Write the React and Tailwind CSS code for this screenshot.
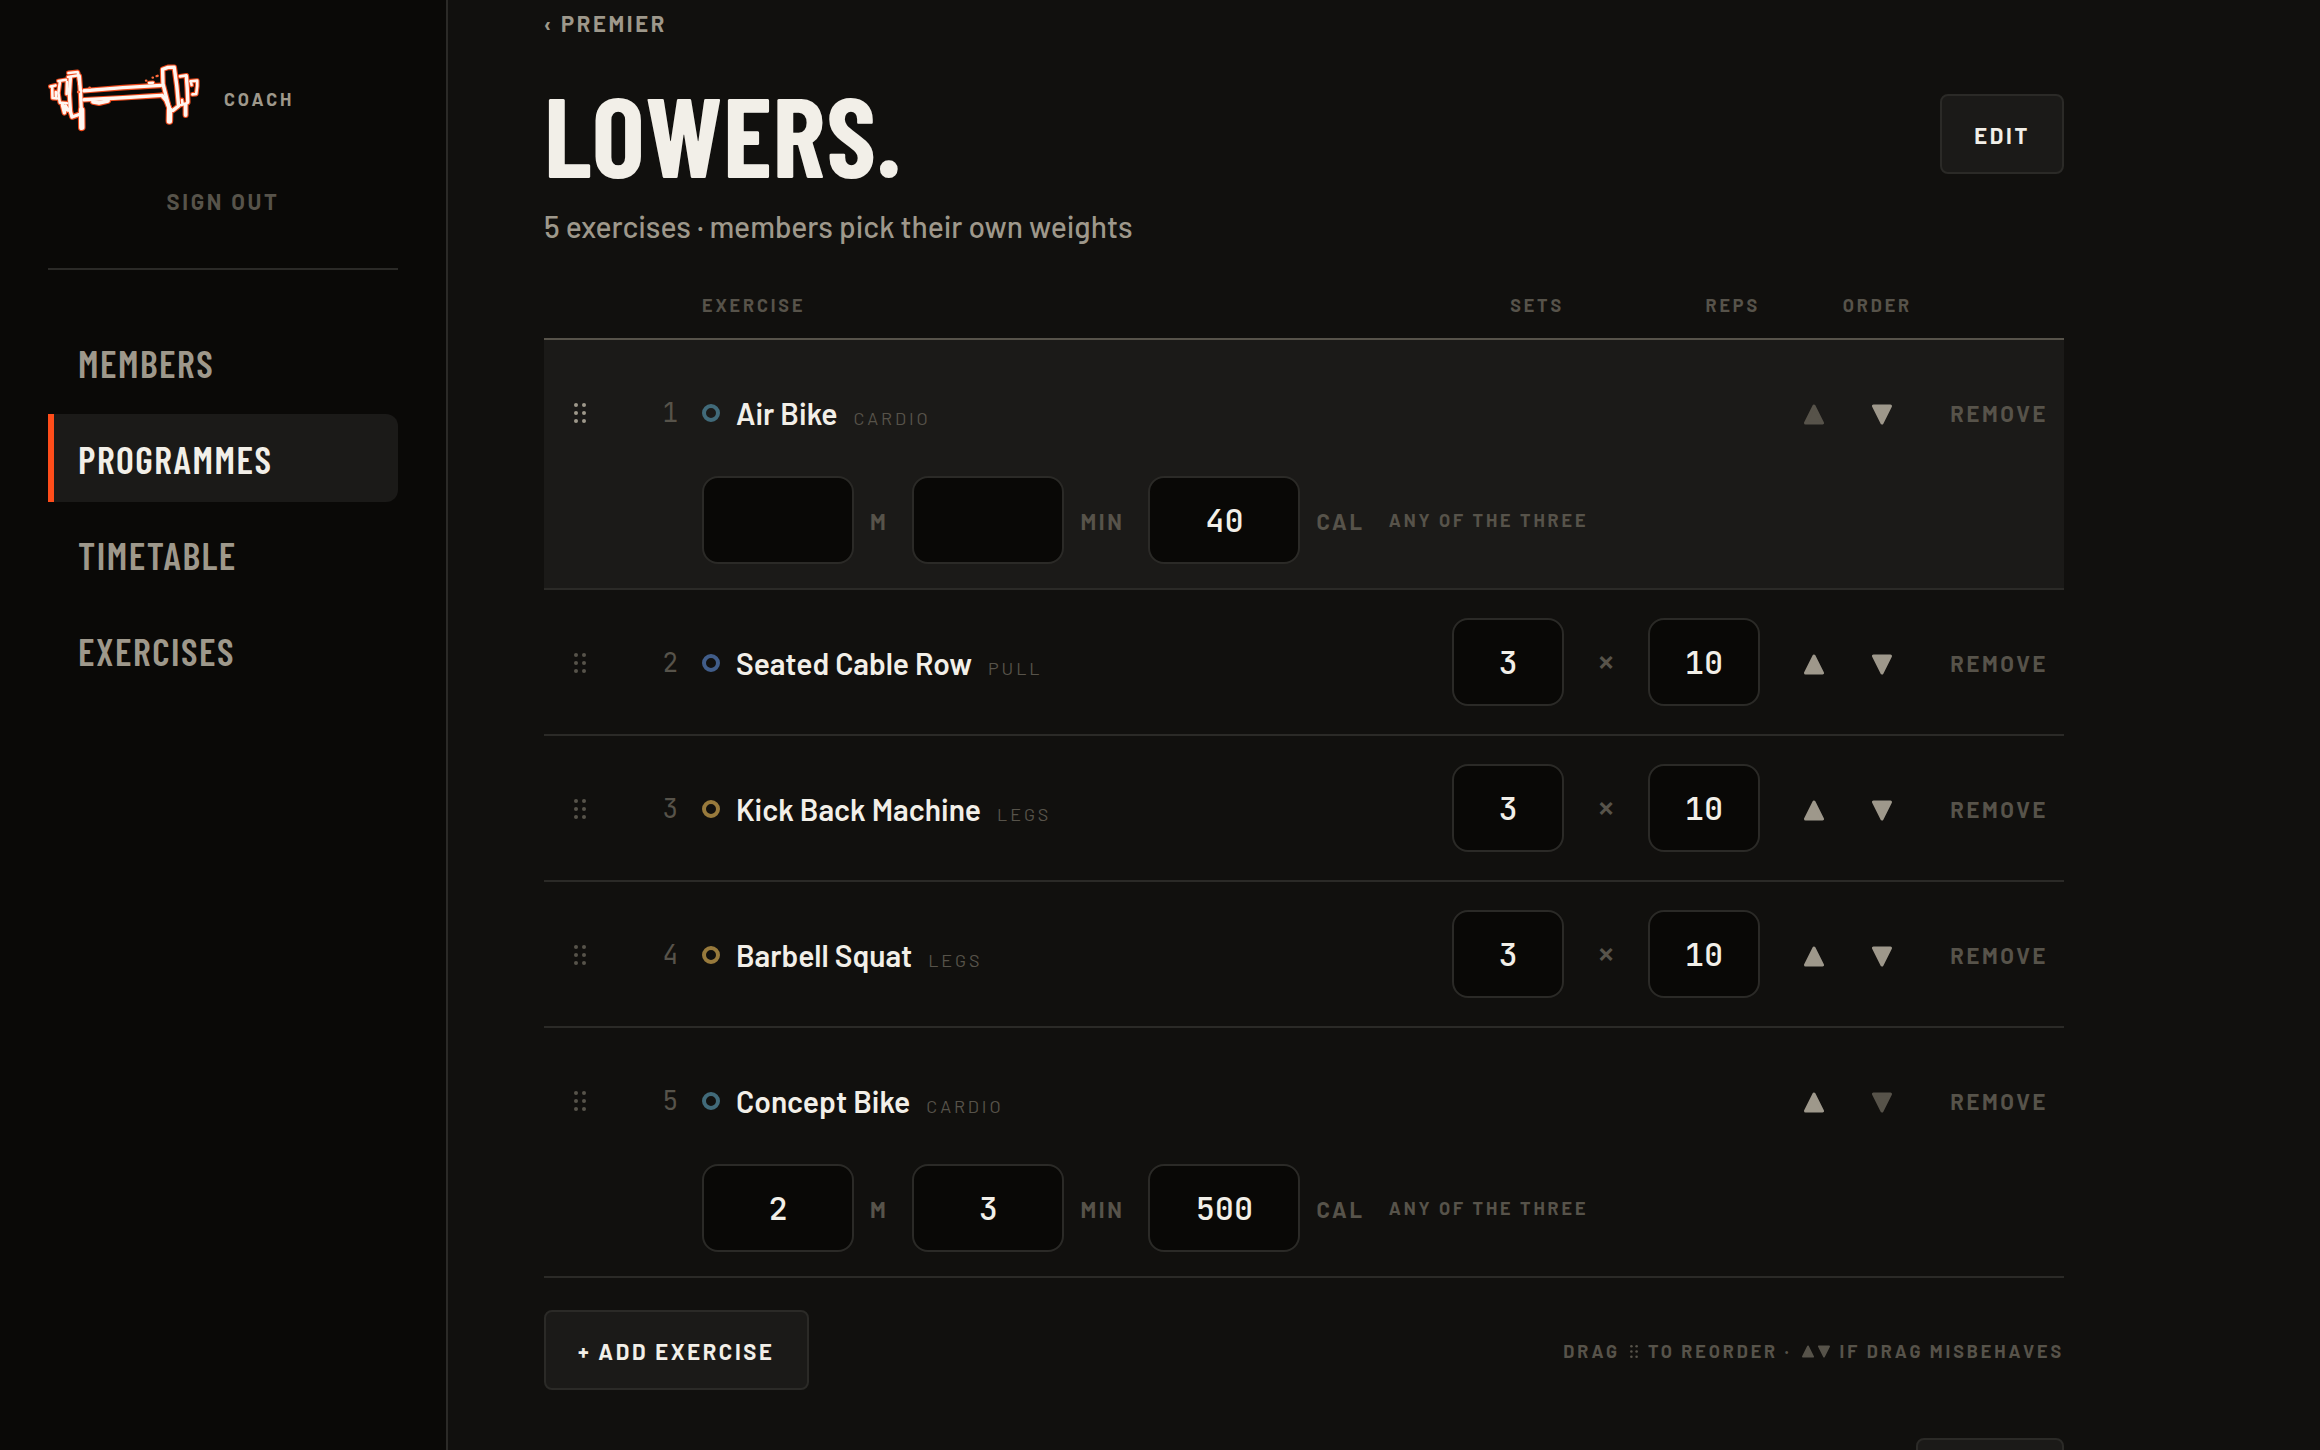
import { useState } from "react";

const NAV = ["Members", "Programmes", "Timetable", "Exercises"];

const EXERCISES = [
  { name: "Air Bike", group: "Cardio", targets: ["", "", "40"] },
  { name: "Seated Cable Row", group: "Pull", sets: "3", reps: "10" },
  { name: "Kick Back Machine", group: "Legs", sets: "3", reps: "10" },
  { name: "Barbell Squat", group: "Legs", sets: "3", reps: "10" },
  { name: "Concept Bike", group: "Cardio", targets: ["2", "3", "500"] },
];

const RING = {
  Cardio: "border-[#416a79]",
  Pull: "border-[#415d89]",
  Legs: "border-[#987a3c]",
};

const UNITS = ["m", "min", "cal"];

const buttonStyle =
  "h-20 rounded-lg border-2 border-[#2b2a27] bg-[#1b1a18] px-8 pt-0.5 text-[22px] font-bold uppercase tracking-[0.12em] text-[#f2efe8]";

const fieldStyle =
  "h-[88px] rounded-2xl border-2 border-[#2b2a27] bg-[#090806] text-center font-['JetBrains_Mono',monospace] text-[32px] font-medium tracking-normal text-[#f2efe8] outline-none";

function Logo() {
  const layers = [
    { color: "#ee4a1c", extra: 2.2 },
    { color: "#fff6f0", extra: 0 },
  ];
  return (
    <svg viewBox="0 0 152 68" className="h-[68px] w-[152px]" role="img" aria-label="Dumbbell" fill="none" strokeLinejoin="round" strokeLinecap="round">
      {layers.map(({ color, extra }) => (
        <g key={color} stroke={color}>
          <g strokeWidth={2.6 + extra}>
            <path d="M2.4 22.5 L7.5 21.4 M4.2 23 L4.5 34 L9 34.4 M7.8 28 L8 34" />
            <path d="M10.4 17 L18 15.8 M12 17.5 L10.4 29 L11.8 38.6 L19 39.2 M19 18 L18.6 30" />
            <path d="M20.4 9 L29.5 8 M20 13 L29 11.5 M30 8.6 L31.5 20" />
            <path d="M132 12.4 L138.5 11.4 M133 41 L139.5 39 M134.5 40 L134 36" />
            <path d="M142.4 17.2 L149.2 16.6 L149.2 22 L148.2 30 L144.4 30.4 M142.8 17.6 L143.6 21" />
          </g>
          <g strokeWidth={3.4 + extra}>
            <path d="M14.4 41 L16.4 48.8 L17.4 42 L20 46 M22 46 L24 53 L31 50.5" />
            <path d="M22.4 13.4 L21.4 30 L22.4 47" />
            <path d="M31.3 12 L32.6 30 L33.4 51" />
            <path d="M36 26.8 L75 23.6 L113 21.4" />
            <path d="M36 35.8 L75 33.8 L113 31.4" />
            <path d="M115 20 L114.6 5.4 L120 3.4 L126.2 3.2 L128.8 22 L130.6 42 L125 46.4 L121.8 46.4 L115 20" />
            <path d="M138.4 12.4 L139.2 24 L139.8 38" />
          </g>
          <g strokeWidth={3.8 + extra}>
            <path d="M45 37.8 L51 39 L60 36.8" />
            <path d="M114 31.4 L118.2 36.4 L121.2 44" />
            <path d="M137.6 41 L137.6 51" />
          </g>
          <g strokeWidth={5.4 + extra}>
            <path d="M33.6 46 L33.8 63.4" />
            <path d="M121.6 46 L121.4 57" />
          </g>
          <path d="M101 19 L105 18.7" strokeWidth={2.4 + extra} />
        </g>
      ))}
      <path d="M98 16.6 L98.3 16.6 M104.6 13.6 L104.9 13.6 M108.6 12.1 L109.6 11.8 M41.5 23.6 L41.8 23.6 M30 28 L31 28" stroke="#ff6a3c" strokeWidth="2.4" />
    </svg>
  );
}

function Triangle({ down, className = "h-[21px] w-5" }) {
  return (
    <svg viewBox="0 0 20 21" className={className} fill="currentColor" stroke="currentColor" strokeWidth="3" strokeLinejoin="round" aria-hidden="true">
      <path d={down ? "M1.5 2 H18.5 L10 19 Z" : "M10 2 L18.5 19 H1.5 Z"} />
    </svg>
  );
}

function Grip({ className = "h-5 w-3" }) {
  return (
    <svg viewBox="0 0 12 20" className={className} fill="currentColor" aria-hidden="true">
      {[2, 10].map((x) => [2, 10, 18].map((y) => <circle key={`${x}-${y}`} cx={x} cy={y} r="2" />))}
    </svg>
  );
}

function Field({ label, initial, className }) {
  const [value, setValue] = useState(initial);
  return (
    <input
      type="text"
      inputMode="numeric"
      aria-label={label}
      value={value}
      onChange={(e) => setValue(e.target.value)}
      className={className}
    />
  );
}

function ExerciseRows({ item, index, count }) {
  const { name, group, targets } = item;
  const first = index === 0;
  const last = index === count - 1;
  const pad = targets ? "pt-7 pb-5" : "py-7";
  const moveStyle = "flex h-[88px] w-[68px] items-center justify-center pt-1 text-[#9e988b] disabled:text-[#57534a]";
  return (
    <tbody className={first ? "border-b-2 border-[#2b2a27] bg-[#1b1a18]" : "border-b-2 border-[#2b2a27]"}>
      <tr>
        <td className={pad}>
          <button
            type="button"
            aria-label={`Drag ${name}`}
            className={`flex h-[88px] w-[72px] items-center justify-center pt-0.5 ${first ? "text-[#9e988b]" : "text-[#57534a]"}`}
          >
            <Grip />
          </button>
        </td>
        <td className={`${pad} pr-6 text-right font-['JetBrains_Mono',monospace] text-[26px] text-[#57534a]`}>{index + 1}</td>
        <td className={pad}>
          <div className="flex h-[88px] items-center gap-4 pt-0.5">
            <span className={`size-[18px] shrink-0 rounded-full border-4 ${RING[group]}`} />
            <span className="flex items-baseline gap-4 whitespace-nowrap">
              <span className="text-[30px] font-semibold text-[#f2efe8]">{name}</span>
              <span className="text-[18px] uppercase tracking-[0.16em] text-[#57534a]">{group}</span>
            </span>
          </div>
        </td>
        <td className={`${pad} text-right`}>
          {!targets && <Field label={`${name} sets`} initial={item.sets} className={`w-28 ${fieldStyle}`} />}
        </td>
        <td className={`${pad} text-center font-['JetBrains_Mono',monospace] text-[32px] font-medium text-[#57534a]`}>{!targets && "×"}</td>
        <td className={`${pad} text-right`}>
          {!targets && <Field label={`${name} reps`} initial={item.reps} className={`w-28 ${fieldStyle}`} />}
        </td>
        <td className={pad}>
          <div className="flex justify-end">
            <button type="button" disabled={first} aria-label={`Move ${name} up`} className={moveStyle}>
              <Triangle />
            </button>
            <button type="button" disabled={last} aria-label={`Move ${name} down`} className={moveStyle}>
              <Triangle down />
            </button>
          </div>
        </td>
        <td className={`${pad} text-right`}>
          <button type="button" className="h-[88px] px-4 pt-0.5 text-[22px] font-bold uppercase tracking-[0.12em] text-[#57534a]">
            Remove
          </button>
        </td>
      </tr>
      {targets && (
        <tr>
          <td colSpan={2} />
          <td colSpan={6} className="pb-6">
            <div className="flex items-center text-[22px] font-bold uppercase tracking-[0.12em] text-[#57534a]">
              {UNITS.map((unit, i) => (
                <label key={unit} className="mr-6 flex items-center gap-4">
                  <Field label={`${name} ${unit}`} initial={targets[i]} className={`w-[152px] ${fieldStyle}`} />
                  <span className="pt-0.5">{unit}</span>
                </label>
              ))}
              <span className="text-[18px] tracking-[0.16em]">any of the three</span>
            </div>
          </td>
        </tr>
      )}
    </tbody>
  );
}

export default function App() {
  return (
    <div className="flex h-screen overflow-hidden bg-[#11100e] font-['Barlow','Roboto',sans-serif] leading-normal text-[#f2efe8]">
      <aside className="flex w-[448px] shrink-0 flex-col border-r-2 border-[#2b2a27] bg-[#0a0907] px-12 pt-16">
        <div className="flex items-center gap-6">
          <Logo />
          <span className="pt-0.5 text-[18px] font-bold uppercase tracking-[0.16em] text-[#9e988b]">Coach</span>
        </div>
        <div className="mt-8 flex h-[106px] items-start justify-center border-b-2 border-[#2b2a27]">
          <button type="button" className="h-[74px] text-[22px] font-bold uppercase tracking-[0.12em] text-[#57534a]">
            Sign out
          </button>
        </div>
        <nav className="mt-12 flex flex-col gap-2">
          {NAV.map((item) => (
            <a
              key={item}
              href={`#${item.toLowerCase()}`}
              className={`flex h-[88px] items-center rounded-r-xl border-l-[6px] px-6 pt-0.5 font-['Barlow_Condensed','Roboto_Condensed',sans-serif] text-[38px] font-semibold uppercase tracking-[0.04em] ${
                item === "Programmes" ? "border-[#ff4d1a] bg-[#1b1a18] text-[#f2efe8]" : "border-transparent text-[#9e988b]"
              }`}
            >
              {item}
            </a>
          ))}
        </nav>
      </aside>

      <main className="min-w-0 flex-1 px-24">
        <div className="max-w-[1520px]">
          <a href="#premier" className="flex h-[46px] items-center text-[22px] font-bold uppercase tracking-[0.12em] text-[#9e988b]">
            ‹ Premier
          </a>
          <header className="mt-8 flex items-start justify-between">
            <div>
              <h1 className="font-['Barlow_Condensed','Roboto_Condensed',sans-serif] text-[112px] leading-[110px] font-bold tracking-[0.005em] uppercase">
                Lowers.
              </h1>
              <p className="mt-4 text-[30px] font-medium text-[#9e988b]">5 exercises · members pick their own weights</p>
            </div>
            <button type="button" className={`mt-4 ${buttonStyle}`}>
              Edit
            </button>
          </header>

          <table className="mt-6 w-full table-fixed border-collapse">
            <colgroup>
              <col className="w-[72px]" />
              <col className="w-[86px]" />
              <col />
              <col className="w-[120px]" />
              <col className="w-[84px]" />
              <col className="w-[112px]" />
              <col className="w-[156px]" />
              <col className="w-[148px]" />
            </colgroup>
            <thead className="border-b-2 border-[#57534a] text-[18px] uppercase tracking-[0.16em] text-[#57534a]">
              <tr className="h-[66px]">
                <th />
                <th />
                <th className="text-left font-bold">Exercise</th>
                <th className="text-right font-bold">Sets</th>
                <th />
                <th className="text-right font-bold">Reps</th>
                <th className="pr-1 text-right font-bold">Order</th>
                <th />
              </tr>
            </thead>
            {EXERCISES.map((item, i) => (
              <ExerciseRows key={item.name} item={item} index={i} count={EXERCISES.length} />
            ))}
          </table>

          <div className="mt-8 flex items-center justify-between">
            <button type="button" className={buttonStyle}>
              + Add exercise
            </button>
            <p className="flex items-center gap-2.5 pt-0.5 text-[18px] font-bold uppercase tracking-[0.16em] text-[#57534a]">
              Drag
              <Grip className="h-[13px] w-2" />
              to reorder ·
              <span className="flex gap-1">
                <Triangle className="h-[13px] w-3" />
                <Triangle down className="h-[13px] w-3" />
              </span>
              if drag misbehaves
            </p>
          </div>

          <div className="mt-12 flex justify-end">
            <button type="button" aria-label="Done" className={`w-[148px] ${buttonStyle}`} />
          </div>
        </div>
      </main>
    </div>
  );
}
